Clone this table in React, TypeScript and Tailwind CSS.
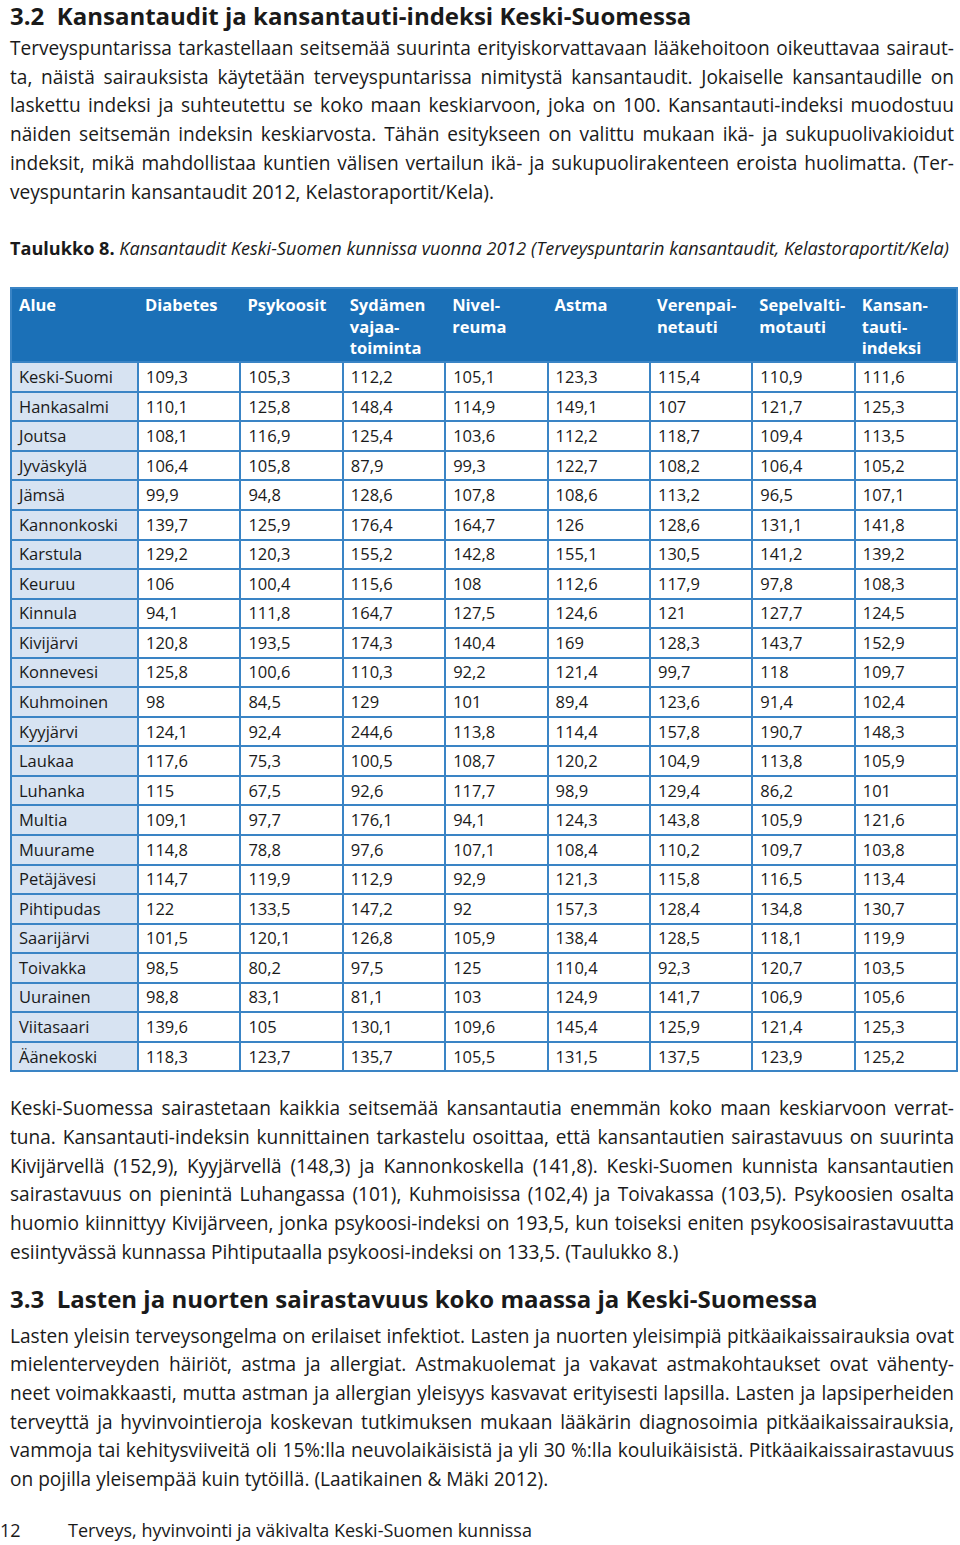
const rows: string[][] = [
  ["Keski-Suomi", "109,3", "105,3", "112,2", "105,1", "123,3", "115,4", "110,9", "111,6"],
  ["Hankasalmi", "110,1", "125,8", "148,4", "114,9", "149,1", "107", "121,7", "125,3"],
  ["Joutsa", "108,1", "116,9", "125,4", "103,6", "112,2", "118,7", "109,4", "113,5"],
  ["Jyväskylä", "106,4", "105,8", "87,9", "99,3", "122,7", "108,2", "106,4", "105,2"],
  ["Jämsä", "99,9", "94,8", "128,6", "107,8", "108,6", "113,2", "96,5", "107,1"],
  ["Kannonkoski", "139,7", "125,9", "176,4", "164,7", "126", "128,6", "131,1", "141,8"],
  ["Karstula", "129,2", "120,3", "155,2", "142,8", "155,1", "130,5", "141,2", "139,2"],
  ["Keuruu", "106", "100,4", "115,6", "108", "112,6", "117,9", "97,8", "108,3"],
  ["Kinnula", "94,1", "111,8", "164,7", "127,5", "124,6", "121", "127,7", "124,5"],
  ["Kivijärvi", "120,8", "193,5", "174,3", "140,4", "169", "128,3", "143,7", "152,9"],
  ["Konnevesi", "125,8", "100,6", "110,3", "92,2", "121,4", "99,7", "118", "109,7"],
  ["Kuhmoinen", "98", "84,5", "129", "101", "89,4", "123,6", "91,4", "102,4"],
  ["Kyyjärvi", "124,1", "92,4", "244,6", "113,8", "114,4", "157,8", "190,7", "148,3"],
  ["Laukaa", "117,6", "75,3", "100,5", "108,7", "120,2", "104,9", "113,8", "105,9"],
  ["Luhanka", "115", "67,5", "92,6", "117,7", "98,9", "129,4", "86,2", "101"],
  ["Multia", "109,1", "97,7", "176,1", "94,1", "124,3", "143,8", "105,9", "121,6"],
  ["Muurame", "114,8", "78,8", "97,6", "107,1", "108,4", "110,2", "109,7", "103,8"],
  ["Petäjävesi", "114,7", "119,9", "112,9", "92,9", "121,3", "115,8", "116,5", "113,4"],
  ["Pihtipudas", "122", "133,5", "147,2", "92", "157,3", "128,4", "134,8", "130,7"],
  ["Saarijärvi", "101,5", "120,1", "126,8", "105,9", "138,4", "128,5", "118,1", "119,9"],
  ["Toivakka", "98,5", "80,2", "97,5", "125", "110,4", "92,3", "120,7", "103,5"],
  ["Uurainen", "98,8", "83,1", "81,1", "103", "124,9", "141,7", "106,9", "105,6"],
  ["Viitasaari", "139,6", "105", "130,1", "109,6", "145,4", "125,9", "121,4", "125,3"],
  ["Äänekoski", "118,3", "123,7", "135,7", "105,5", "131,5", "137,5", "123,9", "125,2"],
];

const headers: string[][] = [
  ["Alue"],
  ["Diabetes"],
  ["Psykoosit"],
  ["Sydämen", "vajaa-", "toiminta"],
  ["Nivel-", "reuma"],
  ["Astma"],
  ["Verenpai-", "netauti"],
  ["Sepelvalti-", "motauti"],
  ["Kansan-", "tauti-", "indeksi"],
];

const para1 = [
  "Terveyspuntarissa tarkastellaan seitsemää suurinta erityiskorvattavaan lääkehoitoon oikeuttavaa sairaut-",
  "ta, näistä sairauksista käytetään terveyspuntarissa nimitystä kansantaudit. Jokaiselle kansantaudille on",
  "laskettu indeksi ja suhteutettu se koko maan keskiarvoon, joka on 100. Kansantauti-indeksi muodostuu",
  "näiden seitsemän indeksin keskiarvosta. Tähän esitykseen on valittu mukaan ikä- ja sukupuolivakioidut",
  "indeksit, mikä mahdollistaa kuntien välisen vertailun ikä- ja sukupuolirakenteen eroista huolimatta. (Ter-",
];
const para1Last = "veyspuntarin kansantaudit 2012, Kelastoraportit/Kela).";

const para2 = [
  "Keski-Suomessa sairastetaan kaikkia seitsemää kansantautia enemmän koko maan keskiarvoon verrat-",
  "tuna. Kansantauti-indeksin kunnittainen tarkastelu osoittaa, että kansantautien sairastavuus on suurinta",
  "Kivijärvellä (152,9), Kyyjärvellä (148,3) ja Kannonkoskella (141,8). Keski-Suomen kunnista kansantautien",
  "sairastavuus on pienintä Luhangassa (101), Kuhmoisissa (102,4) ja Toivakassa (103,5). Psykoosien osalta",
  "huomio kiinnittyy Kivijärveen, jonka psykoosi-indeksi on 193,5, kun toiseksi eniten psykoosisairastavuutta",
];
const para2Last = "esiintyvässä kunnassa Pihtiputaalla psykoosi-indeksi on 133,5. (Taulukko 8.)";

const para3 = [
  "Lasten yleisin terveysongelma on erilaiset infektiot. Lasten ja nuorten yleisimpiä pitkäaikaissairauksia ovat",
  "mielenterveyden häiriöt, astma ja allergiat. Astmakuolemat ja vakavat astmakohtaukset ovat vähenty-",
  "neet voimakkaasti, mutta astman ja allergian yleisyys kasvavat erityisesti lapsilla. Lasten ja lapsiperheiden",
  "terveyttä ja hyvinvointieroja koskevan tutkimuksen mukaan lääkärin diagnosoimia pitkäaikaissairauksia,",
  "vammoja tai kehitysviiveitä oli 15%:lla neuvolaikäisistä ja yli 30 %:lla kouluikäisistä. Pitkäaikaissairastavuus",
];
const para3Last = "on pojilla yleisempää kuin tytöillä. (Laatikainen & Mäki 2012).";

function Para({ lines, last }: { lines: string[]; last: string }) {
  return (
    <div className="w-[944px] text-[19.1px] leading-[28.7px] text-[#1a1a1a]">
      {lines.map((l, i) => (
        <div key={i} className="whitespace-nowrap text-justify [text-align-last:justify]">
          {l}
        </div>
      ))}
      <div className="whitespace-nowrap">{last}</div>
    </div>
  );
}

export default function App() {
  return (
    <div className="w-[960px] h-[1545px] overflow-hidden bg-white pl-[10px] pr-[6px] font-['Open_Sans',sans-serif] text-[#1a1a1a]">
      <h1 className="text-[24px] font-bold leading-[32px] whitespace-nowrap">
        3.2&nbsp; Kansantaudit ja kansantauti-indeksi Keski-Suomessa
      </h1>
      <div className="mt-[2px]">
        <Para lines={para1} last={para1Last} />
      </div>

      <p className="mt-[31px] text-[18.1px] leading-[22px] whitespace-nowrap">
        <span className="font-bold">Taulukko 8.</span>{" "}
        <span className="italic">
          Kansantaudit Keski-Suomen kunnissa vuonna 2012 (Terveyspuntarin kansantaudit, Kelastoraportit/Kela)
        </span>
      </p>

      <table className="mt-[28px] w-[946px] table-fixed border-collapse border-2 border-[#3a84c5] text-[16.5px]">
        <colgroup>
          <col className="w-[127px]" />
          {headers.slice(1).map((_, i) => (
            <col key={i} className="w-[102.4px]" />
          ))}
        </colgroup>
        <thead>
          <tr className="bg-[#1b70b7] h-[74px]">
            {headers.map((h, i) => (
              <th
                key={i}
                className="align-top text-left font-bold text-white px-[7px] pt-[5px] leading-[21.5px]"
              >
                {h.map((w, j) => (
                  <div key={j}>{w}</div>
                ))}
              </th>
            ))}
          </tr>
        </thead>
        <tbody>
          {rows.map((r, i) => (
            <tr key={i} className="h-[29.55px]">
              {r.map((c, j) => (
                <td
                  key={j}
                  className={`border-2 border-[#3a84c5] px-[7px] py-0 leading-[20px] whitespace-nowrap ${
                    j === 0 ? "bg-[#d7e3f2]" : "bg-white"
                  }`}
                >
                  {c}
                </td>
              ))}
            </tr>
          ))}
        </tbody>
      </table>

      <div className="mt-[22px]">
        <Para lines={para2} last={para2Last} />
      </div>

      <h2 className="mt-[17px] text-[24px] font-bold leading-[30px] whitespace-nowrap">
        3.3&nbsp; Lasten ja nuorten sairastavuus koko maassa ja Keski-Suomessa
      </h2>
      <div className="mt-[8px]">
        <Para lines={para3} last={para3Last} />
      </div>

      <div className="mt-[24px] flex text-[18px] leading-[24px] -ml-[10px]">
        <span className="w-[68px]">12</span>
        <span>Terveys, hyvinvointi ja väkivalta Keski-Suomen kunnissa</span>
      </div>
    </div>
  );
}
